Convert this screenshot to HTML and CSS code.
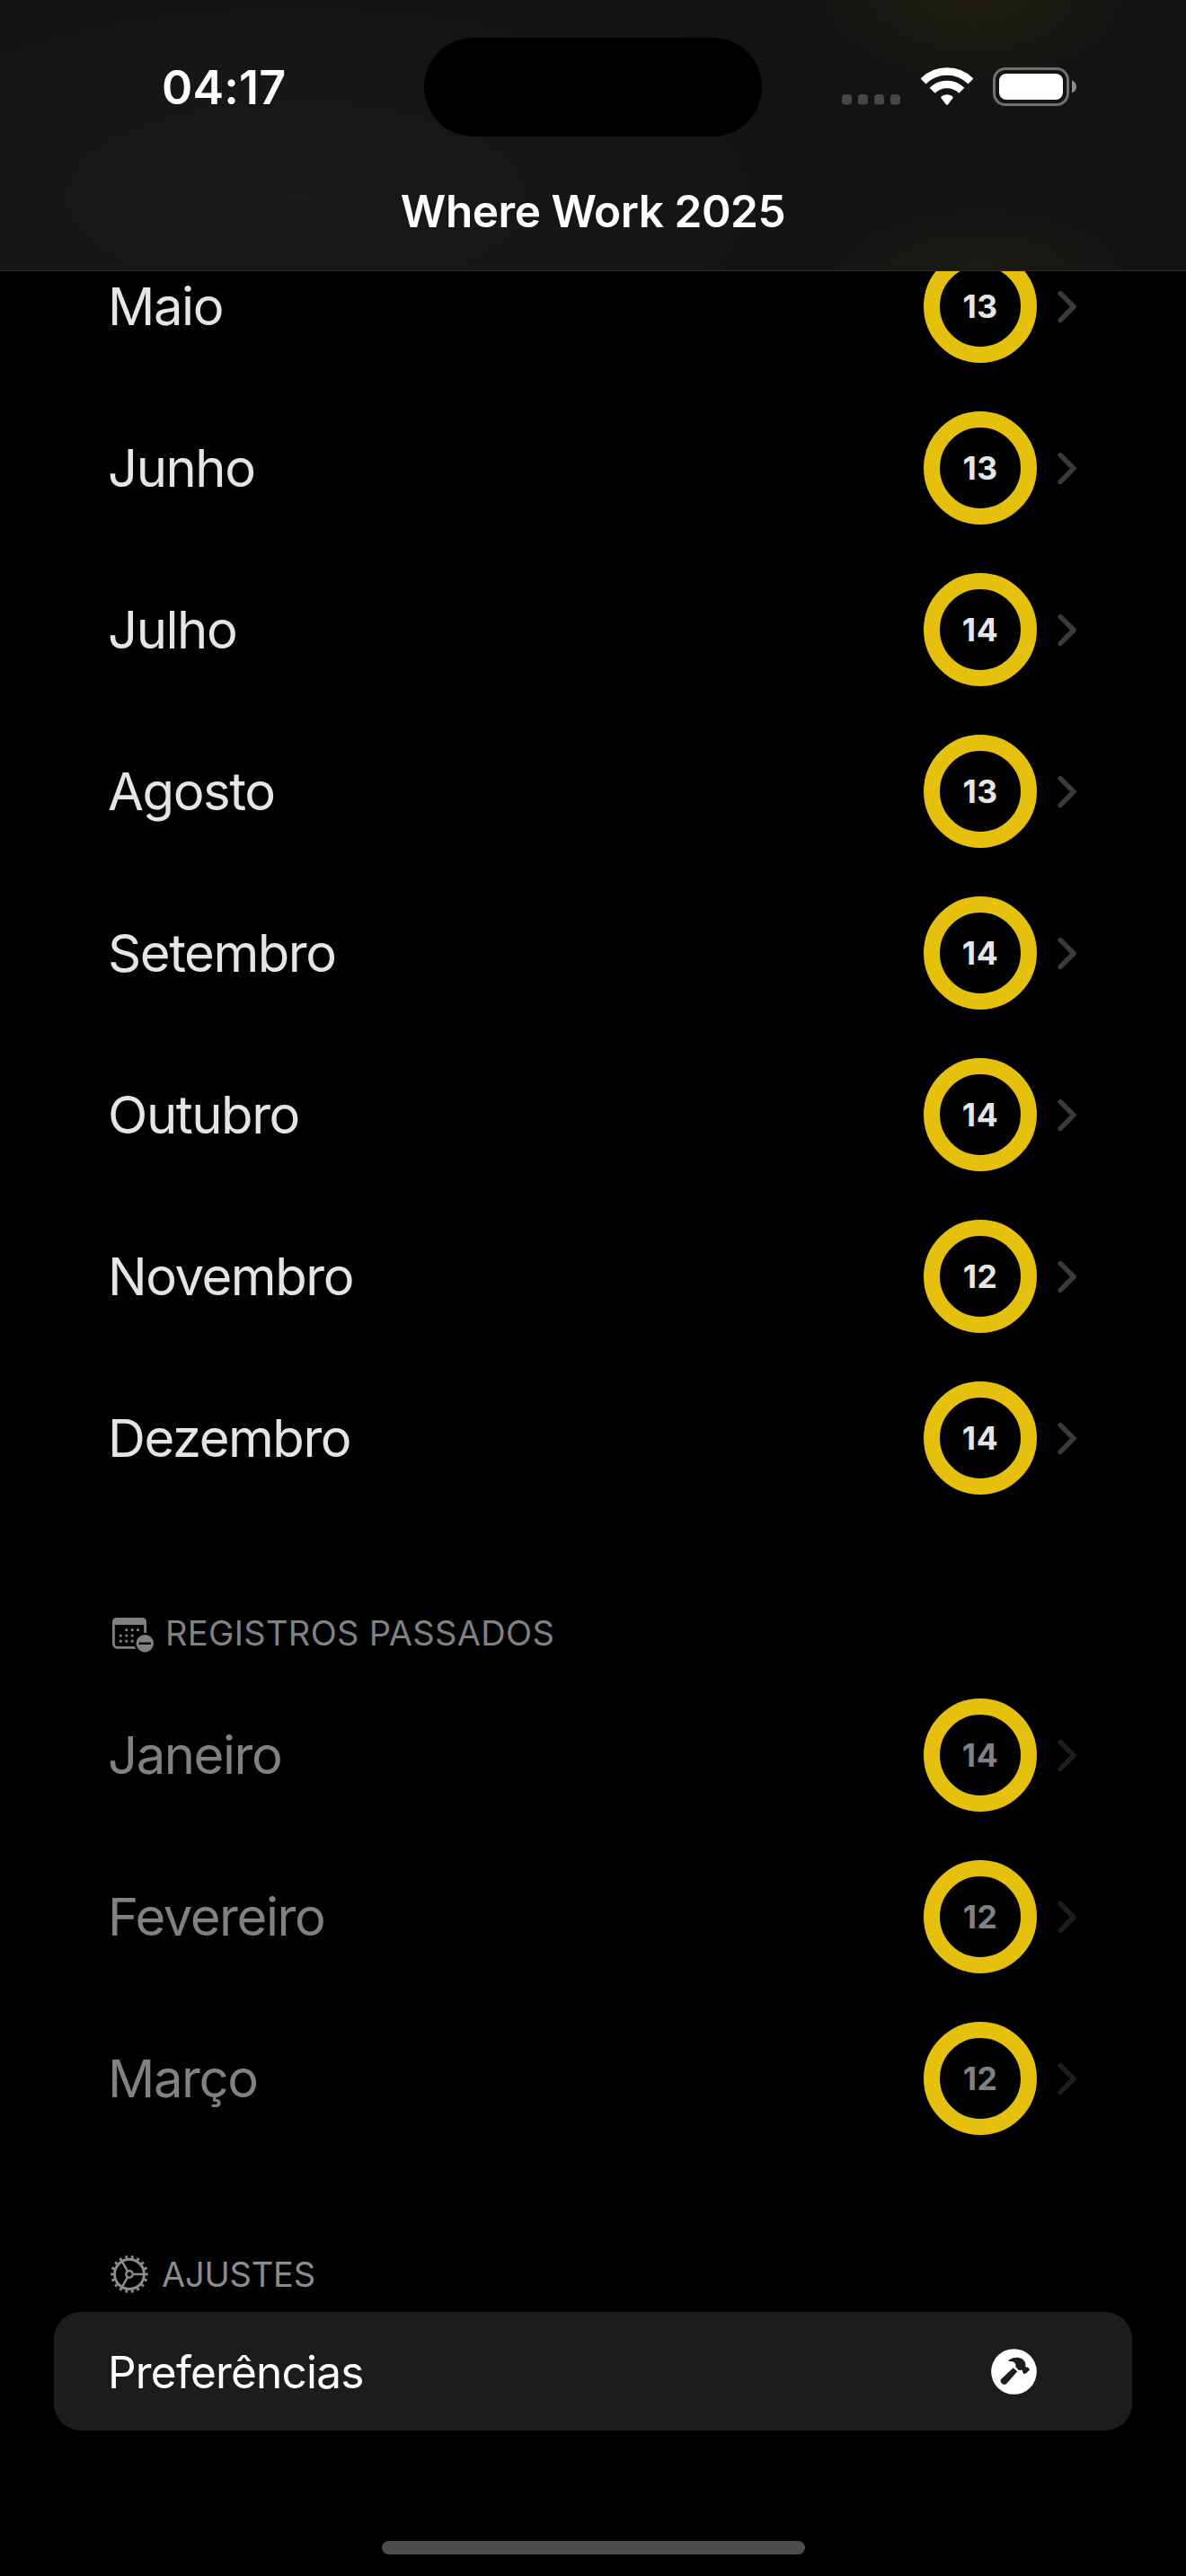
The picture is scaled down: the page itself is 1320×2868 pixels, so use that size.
FILE: index.html
```html
<!DOCTYPE html>
<html lang="pt-BR">
<head>
<meta charset="utf-8">
<title>Where Work 2025</title>
<link rel="stylesheet" href="styles.css">
</head>
<body>
<svg class="defs" aria-hidden="true">
  <symbol id="chevron" viewBox="0 0 22 37"><path d="M3.2 3.6 18 18.5 3.2 33.4" fill="none" stroke="currentColor" stroke-width="5.6" stroke-linecap="round" stroke-linejoin="round"/></symbol>
</svg>
<header class="top">
  <div class="status">
    <time class="clock">04:17</time>
    <div class="island"></div>
    <div class="indicators">
      <svg class="signal" width="65" height="12" viewBox="0 0 65 12" fill="#464645"><rect width="11" height="11.500" rx="3.500"/><rect x="18" width="11" height="11.500" rx="3.500"/><rect x="36" width="11" height="11.500" rx="3.500"/><rect x="54" width="11" height="11.500" rx="3.500"/></svg>
      <svg class="wifi" width="58" height="43" viewBox="0 0 58 43"><g fill="none" stroke="#fff"><path d="M2.500 15.500a37.500 37.500 0 0 1 53 0" stroke-width="8.600"/><path d="M12.700 25.700a23 23 0 0 1 32.600 0" stroke-width="8.600"/></g><path d="M22.900 34.700q-1.500-1.500.2-2.700a11.500 11.500 0 0 1 11.800 0q1.700 1.200.2 2.700L29.900 41.400q-.9.900-1.800 0z" fill="#fff"/></svg>
      <svg class="battery" width="94" height="43" viewBox="0 0 94 43"><rect x="1.500" y="1.500" width="82" height="40" rx="12.500" fill="none" stroke="#70706d" stroke-width="3"/><rect x="7" y="7" width="71" height="29" rx="8" fill="#fff"/><path d="M88 14.500q5 2 5 7t-5 7z" fill="#8b8b89"/></svg>
    </div>
  </div>
  <h1 class="title">Where Work 2025</h1>
</header>
<main>
  <ul class="months">
    <li class="row"><span class="name">Maio</span><span class="ring">13</span><svg class="chev"><use href="#chevron"/></svg></li>
    <li class="row"><span class="name">Junho</span><span class="ring">13</span><svg class="chev"><use href="#chevron"/></svg></li>
    <li class="row"><span class="name">Julho</span><span class="ring">14</span><svg class="chev"><use href="#chevron"/></svg></li>
    <li class="row"><span class="name">Agosto</span><span class="ring">13</span><svg class="chev"><use href="#chevron"/></svg></li>
    <li class="row"><span class="name">Setembro</span><span class="ring">14</span><svg class="chev"><use href="#chevron"/></svg></li>
    <li class="row"><span class="name">Outubro</span><span class="ring">14</span><svg class="chev"><use href="#chevron"/></svg></li>
    <li class="row"><span class="name">Novembro</span><span class="ring">12</span><svg class="chev"><use href="#chevron"/></svg></li>
    <li class="row"><span class="name">Dezembro</span><span class="ring">14</span><svg class="chev"><use href="#chevron"/></svg></li>
  </ul>
  <h2 class="heading heading-past">
    <svg class="calendar" width="48" height="41" viewBox="0 0 48 41"><mask id="cut"><rect width="48" height="41" fill="#fff"/><circle cx="37.300" cy="29.700" r="11.800"/></mask><g mask="url(#cut)"><rect x="2.400" y="2.400" width="35.200" height="32" rx="4.500" fill="none" stroke="currentColor" stroke-width="2.800"/><path d="M1 9V6q0-5 5-5h28q5 0 5 5v3z" fill="currentColor"/><path d="M16.700 14.700h.01M23.200 14.700h.01M29.500 14.700h.01M10.300 21h.01M16.700 21h.01M23.200 21h.01M10.300 27.200h.01M16.700 27.200h.01M23.200 27.200h.01" stroke="currentColor" stroke-width="3.200" stroke-linecap="round"/></g><circle cx="37.300" cy="29.700" r="9.700" fill="currentColor"/><path d="M31.700 29.700h11.200" stroke="#000" stroke-width="2.400" stroke-linecap="round"/></svg>
    <span>REGISTROS PASSADOS</span>
  </h2>
  <ul class="months past">
    <li class="row"><span class="name">Janeiro</span><span class="ring">14</span><svg class="chev"><use href="#chevron"/></svg></li>
    <li class="row"><span class="name">Fevereiro</span><span class="ring">12</span><svg class="chev"><use href="#chevron"/></svg></li>
    <li class="row"><span class="name">Março</span><span class="ring">12</span><svg class="chev"><use href="#chevron"/></svg></li>
  </ul>
  <h2 class="heading heading-settings">
    <svg width="42" height="42" viewBox="-21 -21 42 42" fill="none" stroke="currentColor"><circle r="16.500" stroke-width="3"/><circle r="19.200" stroke-width="3.200" pathLength="180" stroke-dasharray="4.200 5.800" stroke-dashoffset="2.100"/><circle r="3.700" stroke-width="2.400"/><path d="M4.500 0H16M-2.300-3.900-8-13.900M-2.300 3.900-8 13.900" stroke-width="2.400"/></svg>
    <span>AJUSTES</span>
  </h2>
  <section class="card">
    <span>Preferências</span>
    <svg width="51" height="51" viewBox="69 75 153 153"><circle cx="145.500" cy="151.500" r="76" fill="#fff"/><g fill="#1c1c1e"><path d="M128 113C140 103 160 101 173 109Q186 118 184 134L187 138 191 136 198 144Q199 147 182 159 179 160 175 155 176 150 173 146 167 147 161 146L151 135Q154 123 141 118 134 116 128 117z"/><path d="M143 139 157 151 121 191Q115 197 108 193L102 187Q98 181 103 176z"/></g></svg>
  </section>
</main>
<div class="home"></div>
</body>
</html>
```
FILE: styles.css
```css
* { box-sizing: border-box; margin: 0; padding: 0; }
body { width: 1320px; height: 2868px; overflow: hidden; background: #000; color: #fff; font-family: Inter, "Liberation Sans", sans-serif; display: flex; flex-direction: column; }
.defs { display: none; }
svg { display: block; flex: none; }

.top { position: relative; z-index: 1; flex: none; height: 302px; border-bottom: 1px solid #2a2a2a; display: flex; flex-direction: column;
  background:
    radial-gradient(ellipse 190px 110px at 1083px -10px, #1f1d0f, transparent),
    radial-gradient(ellipse 190px 90px at 1090px 310px, #1c1b13, transparent),
    radial-gradient(ellipse 620px 260px at 330px 220px, #181a19, transparent),
    #121413; }
.status { height: 194px; display: grid; grid-template-columns: 472px 376px 472px; align-items: center; }
.clock { justify-self: start; padding-left: 180px; font-size: 52px; font-weight: 600; line-height: 60px; letter-spacing: 0.2px; margin-top: 2px; }
.island { height: 110px; border-radius: 55px; background: #000; }
.indicators { display: flex; align-items: flex-end; padding: 0 0 0 89px; margin-top: -1px; }
.signal { margin-bottom: 1px; }
.wifi { margin-left: 23px; }
.battery { margin-left: 22px; }
.title { text-align: center; font-size: 49.5px; font-weight: 600; line-height: 60px; letter-spacing: -0.45px; margin-top: 11px; }

main { display: flex; flex-direction: column; margin-top: -51px; }
.months { list-style: none; }
.row { height: 180px; padding: 0 121px 0 120px; display: flex; align-items: center; color: #e5e5e5; }
.name { flex: 1; font-size: 58px; line-height: 70px; letter-spacing: -1.45px; }
.ring { width: 126px; height: 126px; border: 18px solid #e5c00c; border-radius: 50%; display: grid; place-items: center; font-size: 35.5px; font-weight: 700; letter-spacing: 0.5px; }
.chev { width: 22px; height: 37px; margin-left: 23px; color: #3a3a3a; }
.past .row { color: #808085; }
.past .chev { color: #1d1d1d; }
.heading { display: flex; align-items: center; color: #808085; font-size: 38px; font-weight: 400; line-height: 48px; }
.heading-past { height: 173px; padding: 81px 0 0 124px; gap: 12px; letter-spacing: 0.35px; }
.calendar { margin-top: 5px; }
.heading-settings { height: 170px; padding: 86px 0 0 123px; gap: 15px; color: #8b8b91; letter-spacing: -0.2px; }
.card { height: 132px; margin: 0 60px; padding: 1px 106px 0 60px; border-radius: 30px; background: #1c1c1e; display: flex; align-items: center; justify-content: space-between; font-size: 49.5px; line-height: 60px; letter-spacing: -0.8px; }
.home { width: 471px; height: 15px; margin: auto auto 24px; border-radius: 8px; background: #4d4d4d; }
```
